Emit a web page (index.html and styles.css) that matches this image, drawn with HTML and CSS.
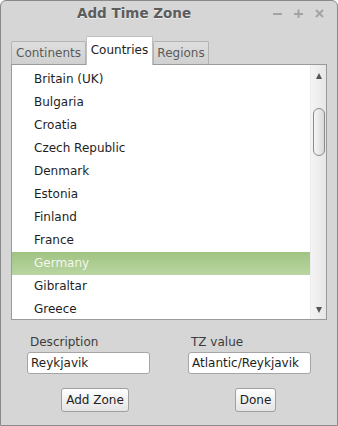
FILE: index.html
```html
<!DOCTYPE html>
<html lang="en">
<head>
    <meta charset="UTF-8">
    <title>Add Time Zone</title>
    <link rel="stylesheet" href="styles.css">
</head>
<body>
<div class="window">
    <div class="titlebar">
        <span class="title">Add Time Zone</span>
        <div class="controls">
            <svg width="9" height="9" viewBox="0 0 9 9"><rect x="0" y="4" width="9" height="2" fill="#a3a3a3"/></svg>
            <svg width="9" height="9" viewBox="0 0 9 9"><rect x="0" y="4" width="9" height="2" fill="#a3a3a3"/><rect x="3.5" y="0.5" width="2" height="9" fill="#a3a3a3"/></svg>
            <svg width="9" height="9" viewBox="0 0 9 9"><path d="M1 1 L8 8 M8 1 L1 8" stroke="#a3a3a3" stroke-width="2"/></svg>
        </div>
    </div>

    <div class="tabs">
        <div class="tab tab-continents">Continents</div>
        <div class="tab tab-countries active">Countries</div>
        <div class="tab tab-regions">Regions</div>
    </div>

    <div class="listbox">
        <ul class="list">
            <li>Britain (UK)</li>
            <li>Bulgaria</li>
            <li>Croatia</li>
            <li>Czech Republic</li>
            <li>Denmark</li>
            <li>Estonia</li>
            <li>Finland</li>
            <li>France</li>
            <li class="selected">Germany</li>
            <li>Gibraltar</li>
            <li>Greece</li>
        </ul>
        <div class="scrollbar">
            <span class="arrow up"></span>
            <span class="thumb"></span>
            <span class="arrow down"></span>
        </div>
    </div>

    <div class="form">
        <div class="field">
            <label class="field-label">Description</label>
            <div class="entry">Reykjavik</div>
        </div>
        <div class="field">
            <label class="field-label">TZ value</label>
            <div class="entry">Atlantic/Reykjavik</div>
        </div>
        <div class="btn-cell"><button class="btn btn-add">Add Zone</button></div>
        <div class="btn-cell"><button class="btn btn-done">Done</button></div>
    </div>
</div>
</body>
</html>
```

FILE: styles.css
```css
body {
    margin: 0;
    font-family: "DejaVu Sans", sans-serif;
    font-size: 12px;
}
.window {
    width: 338px;
    height: 426px;
    box-sizing: border-box;
    border: 1px solid #8a8a8a;
    border-radius: 6px 6px 0 0;
    background-color: #d6d6d6;
    overflow: hidden;
}
.titlebar {
    display: flex;
    align-items: center;
    height: 24px;
}
.title {
    margin-left: 76px;
    font-weight: bold;
    font-size: 13.5px;
    color: #5c5c5c;
    text-shadow: 0 1px 0 #eeeeee;
}
.controls {
    margin-left: auto;
    margin-right: 13px;
    display: flex;
    gap: 12px;
}
.tabs {
    display: flex;
    align-items: flex-end;
    margin: 11px 0 0 10px;
    height: 28px;
}
.tab {
    box-sizing: border-box;
    height: 23px;
    border: 1px solid #b3b3b3;
    border-bottom: none;
    border-radius: 2px 2px 0 0;
    background: linear-gradient(#dedede, #d0d0d0);
    color: #5a5a5a;
    line-height: 22px;
    text-align: center;
}
.tab-continents {
    width: 75px;
}
.tab-countries {
    width: 67px;
}
.tab-regions {
    width: 56px;
}
.tab.active {
    height: 29px;
    line-height: 26px;
    background: #ffffff;
    border-color: #c0c0c0;
    color: #222222;
    position: relative;
    z-index: 1;
    margin-bottom: -1px;
}
.listbox {
    display: flex;
    margin: 0 10px;
    height: 256px;
    box-sizing: border-box;
    border: 1px solid #9a9a9a;
    background: #ffffff;
}
.list {
    flex: 1;
    list-style: none;
    margin: 0;
    padding: 3px 0 0 0;
    overflow: hidden;
}
.list li {
    height: 23px;
    line-height: 23px;
    padding-left: 22px;
    color: #1e1e1e;
}
.list li.selected {
    background: linear-gradient(#a0c382, #b9d6a1);
    color: #f3f7ee;
}
.scrollbar {
    width: 15px;
    display: flex;
    flex-direction: column;
    align-items: center;
    background: linear-gradient(to right, #f4f4f4, #e6e6e6);
    border-left: 1px solid #ececec;
}
.arrow {
    width: 0;
    height: 0;
    border-left: 3.5px solid transparent;
    border-right: 3.5px solid transparent;
}
.arrow.up {
    margin-top: 8px;
    border-bottom: 6px solid #555555;
}
.arrow.down {
    margin-top: auto;
    margin-bottom: 6px;
    border-top: 6px solid #555555;
}
.thumb {
    margin-top: 29px;
    width: 12px;
    height: 48px;
    box-sizing: border-box;
    border: 1px solid #8a8a8a;
    border-radius: 6px;
    background: linear-gradient(to right, #f6f6f6, #d9d9d9);
}
.form {
    display: grid;
    grid-template-columns: 123px 123px;
    column-gap: 38px;
    padding-left: 26px;
    margin-top: 14px;
}
.field {
    display: flex;
    flex-direction: column;
}
.field-label {
    padding-left: 3px;
    color: #3c3c3c;
    line-height: 17px;
    margin-bottom: 1px;
}
.entry {
    height: 22px;
    box-sizing: border-box;
    border: 1px solid #a5a5a5;
    border-radius: 3px;
    background: #ffffff;
    padding-left: 3px;
    line-height: 20px;
    color: #1e1e1e;
    white-space: nowrap;
    overflow: hidden;
}
.btn-cell {
    margin-top: 14px;
}
.btn {
    height: 24px;
    box-sizing: border-box;
    border: 1px solid #a0a0a0;
    border-radius: 3px;
    background: linear-gradient(#ffffff, #e4e4e4);
    font-family: "DejaVu Sans", sans-serif;
    font-size: 12px;
    color: #222222;
    padding: 0;
}
.btn-add {
    margin-left: 34px;
    width: 68px;
}
.btn-done {
    margin-left: 47px;
    width: 41px;
}
```
